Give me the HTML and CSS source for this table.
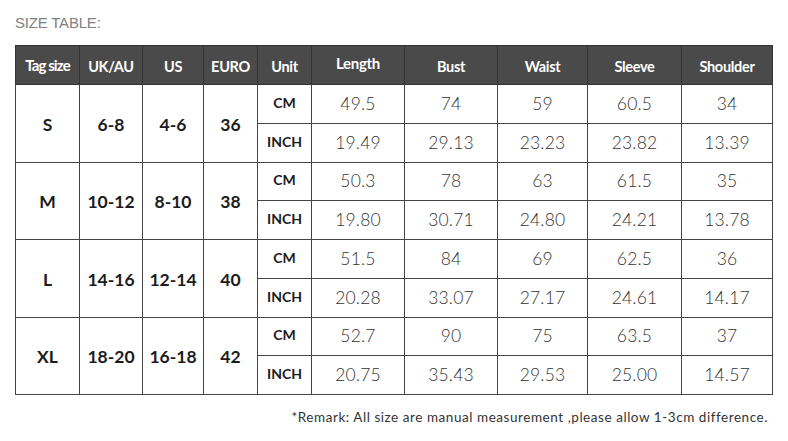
FILE: index.html
```html
<!DOCTYPE html>
<html>
<head>
<meta charset="utf-8">
<link rel="stylesheet" href="styles.css">
</head>
<body>
<div class="page">
  <div class="title">SIZE TABLE:</div>
  <table class="sizes">
    <colgroup>
      <col style="width:64px"><col style="width:63px"><col style="width:61px"><col style="width:54px"><col style="width:54px">
      <col style="width:93px"><col style="width:93px"><col style="width:90px"><col style="width:94px"><col style="width:91px">
    </colgroup>
    <thead>
      <tr class="head">
        <th class="tag">Tag size</th><th>UK/AU</th><th>US</th><th>EURO</th><th>Unit</th>
        <th class="len">Length</th><th>Bust</th><th>Waist</th><th>Sleeve</th><th>Shoulder</th>
      </tr>
    </thead>
    <tbody>
      <tr><td rowspan="2" class="sz">S</td><td rowspan="2" class="sz">6-8</td><td rowspan="2" class="sz">4-6</td><td rowspan="2" class="sz">36</td><td class="unit">CM</td><td class="num">49.5</td><td class="num">74</td><td class="num">59</td><td class="num">60.5</td><td class="num">34</td></tr>
      <tr><td class="unit">INCH</td><td class="num">19.49</td><td class="num">29.13</td><td class="num">23.23</td><td class="num">23.82</td><td class="num">13.39</td></tr>
      <tr><td rowspan="2" class="sz">M</td><td rowspan="2" class="sz">10-12</td><td rowspan="2" class="sz">8-10</td><td rowspan="2" class="sz">38</td><td class="unit">CM</td><td class="num">50.3</td><td class="num">78</td><td class="num">63</td><td class="num">61.5</td><td class="num">35</td></tr>
      <tr><td class="unit">INCH</td><td class="num">19.80</td><td class="num">30.71</td><td class="num">24.80</td><td class="num">24.21</td><td class="num">13.78</td></tr>
      <tr><td rowspan="2" class="sz">L</td><td rowspan="2" class="sz">14-16</td><td rowspan="2" class="sz">12-14</td><td rowspan="2" class="sz">40</td><td class="unit">CM</td><td class="num">51.5</td><td class="num">84</td><td class="num">69</td><td class="num">62.5</td><td class="num">36</td></tr>
      <tr><td class="unit">INCH</td><td class="num">20.28</td><td class="num">33.07</td><td class="num">27.17</td><td class="num">24.61</td><td class="num">14.17</td></tr>
      <tr><td rowspan="2" class="sz">XL</td><td rowspan="2" class="sz">18-20</td><td rowspan="2" class="sz">16-18</td><td rowspan="2" class="sz">42</td><td class="unit">CM</td><td class="num">52.7</td><td class="num">90</td><td class="num">75</td><td class="num">63.5</td><td class="num">37</td></tr>
      <tr><td class="unit">INCH</td><td class="num">20.75</td><td class="num">35.43</td><td class="num">29.53</td><td class="num">25.00</td><td class="num">14.57</td></tr>
    </tbody>
  </table>
  <div class="remark">*Remark: All size are manual measurement ,please allow 1-3cm difference.</div>
</div>
</body>
</html>
```
FILE: styles.css
```css
html, body {
  margin: 0;
  padding: 0;
  background: #ffffff;
}
.page {
  width: 788px;
  height: 441px;
  box-sizing: border-box;
  padding: 14px 16px 0 15px;
  font-family: Lato, "Liberation Sans", sans-serif;
  color: #222;
}
.title {
  font-family: "Liberation Sans", sans-serif;
  font-weight: 400;
  font-size: 15px;
  line-height: 18px;
  color: #808080;
  letter-spacing: -0.2px;
  height: 31px;
}
.sizes {
  border-collapse: collapse;
  table-layout: fixed;
  width: 757px;
}
.sizes tr {
  height: 38.75px;
}
.sizes tr.head {
  height: 39px;
}
.sizes th {
  background: #4a4a4a;
  color: #fff;
  font-weight: 700;
  font-size: 14.5px;
  line-height: 16px;
  padding: 3px 0 0 0;
  border: 1px solid #333;
  text-align: center;
  letter-spacing: -0.3px;
}
.sizes th.tag {
  font-size: 15px;
  letter-spacing: -0.9px;
  padding-top: 0;
}
.sizes th.len {
  padding: 0 0 4px 0;
  font-size: 15px;
}
.sizes td {
  border: 1px solid #444;
  padding: 0;
  line-height: 18px;
  text-align: center;
}
.sizes td.sz {
  font-weight: 700;
  font-size: 17.5px;
  color: #1c1c1c;
  padding-top: 3px;
}
.sizes td.unit {
  font-weight: 700;
  font-size: 14px;
  color: #1c1c1c;
  letter-spacing: 0;
  padding-bottom: 2px;
}
.sizes td.num {
  font-weight: 300;
  font-size: 17.5px;
  color: #333;
  letter-spacing: 0.2px;
}
.remark {
  text-align: right;
  font-size: 13.5px;
  line-height: 16px;
  color: #333;
  margin-top: 14px;
  padding-right: 4px;
  letter-spacing: 0.55px;
}
```
